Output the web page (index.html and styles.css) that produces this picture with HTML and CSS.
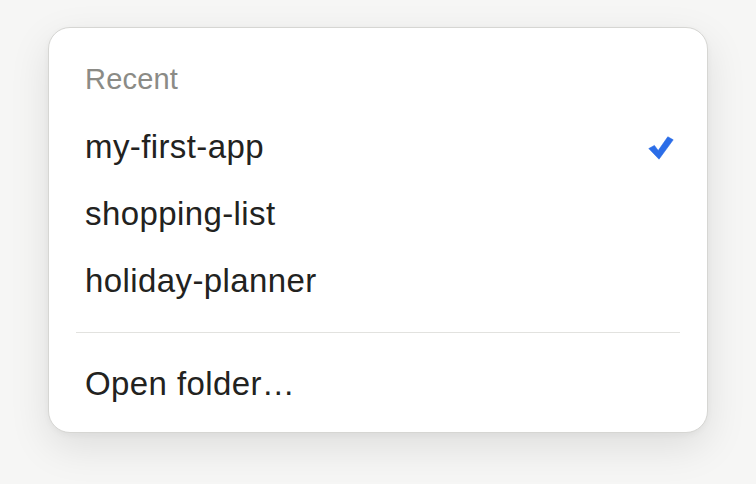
FILE: index.html
```html
<!DOCTYPE html>
<html lang="en">
<head>
<meta charset="utf-8">
<title>Recent projects menu</title>
<link rel="stylesheet" href="styles.css">
</head>
<body>
<div class="menu">
  <div class="menu-header">Recent</div>
  <ul class="menu-list">
    <li class="menu-item is-selected">
      <span class="item-label">my-first-app</span>
      <svg class="check" viewBox="0 0 26 24" width="26" height="24" aria-hidden="true">
        <path d="M0.8 12.6 L6.4 9.4 L10.2 14.6 L19.8 0.8 L25.2 3.8 L11 23.2 Z" fill="#2b6de8" stroke="#2b6de8" stroke-width="0.6" stroke-linejoin="round"/>
      </svg>
    </li>
    <li class="menu-item"><span class="item-label">shopping-list</span></li>
    <li class="menu-item"><span class="item-label">holiday-planner</span></li>
  </ul>
  <div class="menu-divider"></div>
  <div class="menu-item menu-action"><span class="item-label">Open folder…</span></div>
</div>
</body>
</html>
```
FILE: styles.css
```css
html, body {
  margin: 0;
  padding: 0;
}
body {
  background: #f6f6f5;
  font-family: "Liberation Sans", Arial, sans-serif;
  width: 756px;
  height: 484px;
  overflow: hidden;
  padding: 27px 48px 0;
  box-sizing: border-box;
}
.menu {
  background: #ffffff;
  border: 1px solid #d6d6d3;
  border-radius: 22px;
  box-shadow: 0 14px 40px rgba(0, 0, 0, 0.10), 0 2px 6px rgba(0, 0, 0, 0.04);
  padding: 18px 0 15px;
  box-sizing: border-box;
  height: 406px;
}
.menu-header {
  height: 67px;
  line-height: 67px;
  padding: 0 36px;
  font-size: 29px;
  letter-spacing: 0.2px;
  color: #8b8b86;
}
.menu-list {
  list-style: none;
  margin: 0;
  padding: 0;
}
.menu-item {
  display: flex;
  align-items: center;
  justify-content: space-between;
  height: 67px;
  padding: 0 33px 0 36px;
  font-size: 33px;
  letter-spacing: 0.4px;
  color: #222220;
}
.item-label {
  line-height: 67px;
}
.check {
  display: block;
  margin-top: 3px;
}
.menu-divider {
  height: 1px;
  background: #e2e2df;
  margin: 18px 27px 17px;
}
```
